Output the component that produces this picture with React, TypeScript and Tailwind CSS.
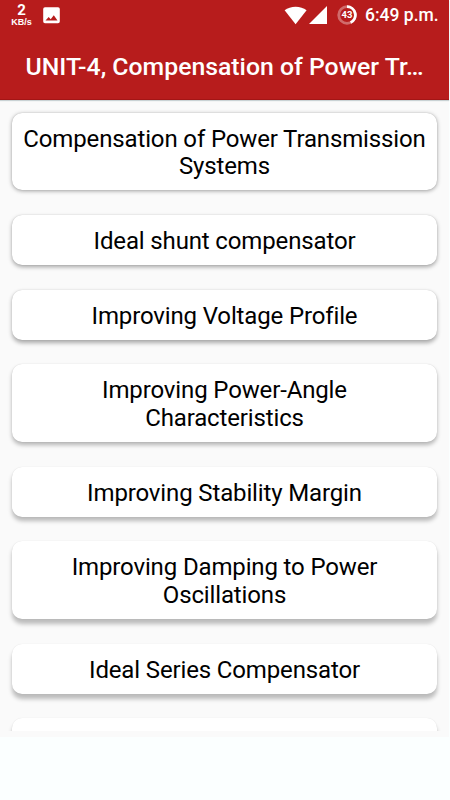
import clsx from 'clsx';

interface Topic {
  title: string;
  shadow: string;
}

// The drop shadow gets deeper the further down the screen a card sits
const topics: Topic[] = [
  { title: 'Compensation of Power Transmission Systems', shadow: 'shadow-[0_1px_4px_rgba(0,0,0,0.36),0_0_1px_rgba(0,0,0,0.2)]' },
  { title: 'Ideal shunt compensator', shadow: 'shadow-[0_2px_4px_rgba(0,0,0,0.34),0_0_1px_rgba(0,0,0,0.2)]' },
  { title: 'Improving Voltage Profile', shadow: 'shadow-[0_2.5px_4px_rgba(0,0,0,0.32),0_0_1px_rgba(0,0,0,0.18)]' },
  { title: 'Improving Power-Angle Characteristics', shadow: 'shadow-[0_3px_4px_rgba(0,0,0,0.28),0_0_1px_rgba(0,0,0,0.16)]' },
  { title: 'Improving Stability Margin', shadow: 'shadow-[0_4px_4px_rgba(0,0,0,0.26),0_0_1px_rgba(0,0,0,0.14)]' },
  { title: 'Improving Damping to Power Oscillations', shadow: 'shadow-[0_4.5px_4px_rgba(0,0,0,0.25),0_0_1px_rgba(0,0,0,0.12)]' },
  { title: 'Ideal Series Compensator', shadow: 'shadow-[0_5px_4px_rgba(0,0,0,0.25),0_0_1px_rgba(0,0,0,0.12)]' },
];

function StatusBar() {
  return (
    <div className="flex h-[30px] items-center text-white">
      <div className="ml-[10px] flex w-[23px] flex-col items-center font-bold">
        <span className="text-[15px] leading-[15px]">2</span>
        <span className="font-['Liberation_Sans',sans-serif] text-[9px] leading-[9px]">KB/s</span>
      </div>
      <svg className="ml-[10px]" width="17" height="17" viewBox="0 0 17 17">
        <path
          fill="currentColor"
          fillRule="evenodd"
          d="M2 .3h13a1.8 1.8 0 0 1 1.8 1.8v12.4a1.8 1.8 0 0 1-1.8 1.8H2A1.8 1.8 0 0 1 .2 14.5V2.1A1.8 1.8 0 0 1 2 .3zM2.500 13.500h12l-3.700-5.200-3.100 4-2-2.300z"
        />
      </svg>
      <svg className="ml-[224px]" width="23" height="19" viewBox="0 0 23 19">
        <path fill="currentColor" d="M.6 4.200C3.500 2 7.500.7 11.600.7s8.100 1.300 11 3.500L11.600 18.300z" />
      </svg>
      <svg className="ml-[2px]" width="18" height="18" viewBox="0 0 18 18">
        <path fill="currentColor" d="M18 0v18H0z" />
      </svg>
      <svg className="ml-[10px]" width="20" height="20" viewBox="0 0 20 20">
        <circle cx="10" cy="10" r="8.300" fill="none" stroke="#fff" strokeOpacity="0.35" strokeWidth="2.800" />
        <path d="M10 1.700a8.300 8.300 0 0 1 3.600 15.800" fill="none" stroke="#fff" strokeWidth="2.800" />
        <text x="10" y="13.300" textAnchor="middle" fill="#fff" className="text-[9.500px] font-bold">
          43
        </text>
      </svg>
      <span className="ml-[8px] pt-px text-[17.500px] font-medium whitespace-nowrap">6:49 p.m.</span>
    </div>
  );
}

function TopicCard({ title, shadow }: Topic) {
  return (
    <button
      className={clsx(
        'w-full shrink-0 rounded-[10px] bg-white px-[9px] pt-[13px] pb-[9px] text-center text-[24px] leading-[27.900px] tracking-[-0.14px] text-black',
        shadow,
      )}
    >
      {title}
    </button>
  );
}

export default function App() {
  return (
    <div className="h-[800px] w-[450px] overflow-hidden bg-[#fbffff] font-['Roboto',sans-serif]">
      <div className="flex h-[737px] w-[449px] flex-col bg-[#fafafa]">
        <header className="z-10 h-[100px] shrink-0 border-b border-[#a31515] bg-[#b71c1c] shadow-[0_1px_1px_#c9d2d4]">
          <StatusBar />
          <h1 className="mt-[20px] ml-[25.500px] w-[402px] truncate text-[24.800px] leading-[33px] font-medium text-white">
            UNIT-4, Compensation of Power Tr…
          </h1>
        </header>

        <main className="flex h-[631px] flex-col gap-[24.700px] overflow-hidden px-[11.800px] pt-[12.500px]">
          {topics.map((topic) => (
            <TopicCard key={topic.title} {...topic} />
          ))}
          {/* Next card, only its top edge is scrolled into view */}
          <div className="h-[50px] shrink-0 rounded-[10px] bg-white shadow-[0_5px_4px_rgba(0,0,0,0.25),0_0_1px_rgba(0,0,0,0.12)]" />
        </main>
      </div>
    </div>
  );
}
